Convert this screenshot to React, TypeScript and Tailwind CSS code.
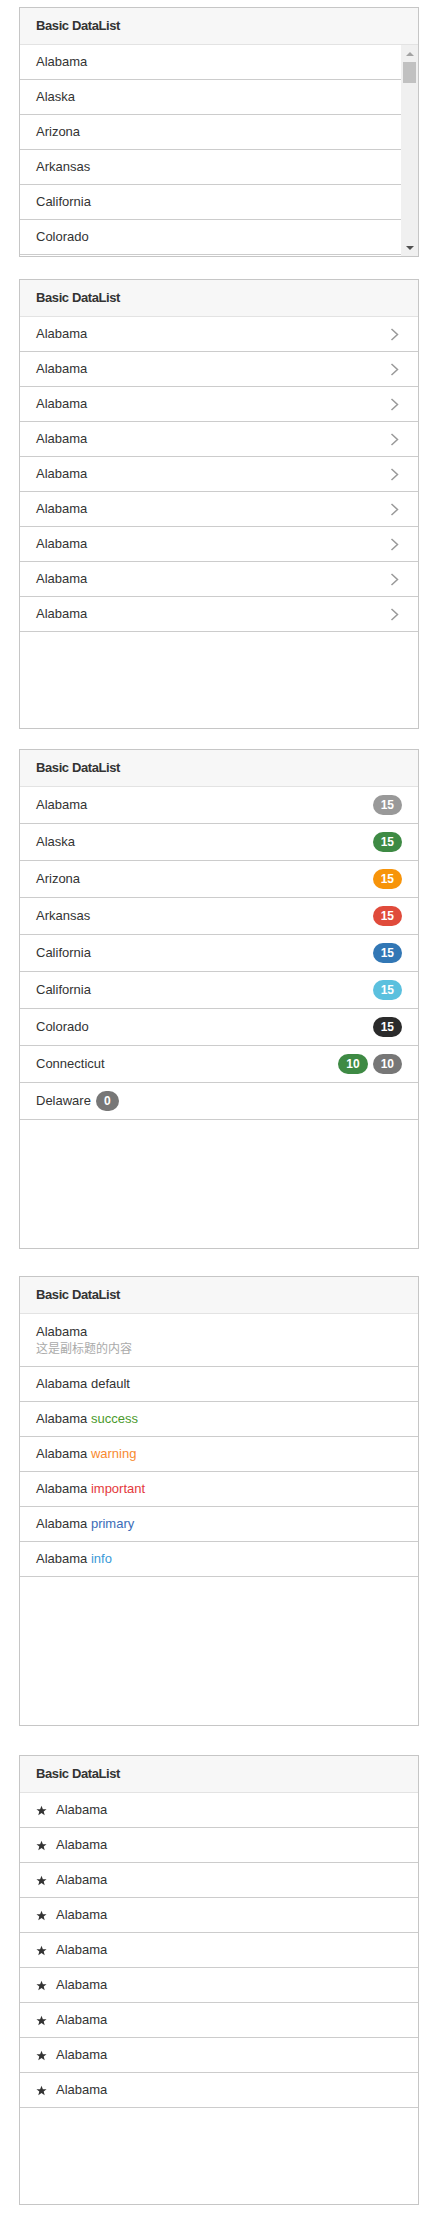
import React from "react";

const FONT = "font-['Liberation_Sans','Noto_Sans_CJK_SC',sans-serif]";

const STATES = ["Alabama", "Alaska", "Arizona", "Arkansas", "California", "Colorado"];

type Badge = { text: string; color: string };

const BADGE_ROWS: { name: string; badges: Badge[]; inline?: boolean }[] = [
  { name: "Alabama", badges: [{ text: "15", color: "bg-[#999999]" }] },
  { name: "Alaska", badges: [{ text: "15", color: "bg-[#3e8a44]" }] },
  { name: "Arizona", badges: [{ text: "15", color: "bg-[#f7940a]" }] },
  { name: "Arkansas", badges: [{ text: "15", color: "bg-[#e04b3b]" }] },
  { name: "California", badges: [{ text: "15", color: "bg-[#3277b5]" }] },
  { name: "California", badges: [{ text: "15", color: "bg-[#5bc0de]" }] },
  { name: "Colorado", badges: [{ text: "15", color: "bg-[#2b2b2b]" }] },
  {
    name: "Connecticut",
    badges: [
      { text: "10", color: "bg-[#3e8a44]" },
      { text: "10", color: "bg-[#777777]" },
    ],
  },
  { name: "Delaware", badges: [{ text: "0", color: "bg-[#777777]" }], inline: true },
];

const COLOR_ROWS = [
  { word: "default", color: "text-[#333333]" },
  { word: "success", color: "text-[#4a9a2c]" },
  { word: "warning", color: "text-[#f88a30]" },
  { word: "important", color: "text-[#e4393c]" },
  { word: "primary", color: "text-[#3b6cb7]" },
  { word: "info", color: "text-[#3a99d8]" },
];

export default function App() {
  const nine = Array.from({ length: 9 });

  return (
    <div className={`min-h-screen bg-white pl-[19px] pt-[7px] pb-[32px] text-[13px] text-[#333] ${FONT}`}>
      {/* ── 1. scrolling list ───────────────────────── */}
      <Card className="h-[250px]">
        <div className="flex h-[211px]">
          <div className="flex-1">
            {STATES.map((s, i) => (
              <Row key={i}>{s}</Row>
            ))}
          </div>
          <FakeScrollbar />
        </div>
      </Card>

      {/* ── 2. chevrons ─────────────────────────────── */}
      <Card className="mt-[22px] h-[450px]">
        {nine.map((_, i) => (
          <Row key={i}>
            <span className="flex-1">Alabama</span>
            <svg width="9" height="13" viewBox="0 0 9 13" className="mr-[3px]">
              <polyline points="1.5,1 7.5,6.5 1.5,12" fill="none" stroke="#999" strokeWidth="1.5" />
            </svg>
          </Row>
        ))}
      </Card>

      {/* ── 3. badges ───────────────────────────────── */}
      <Card className="mt-[20px] h-[500px]">
        {BADGE_ROWS.map((r, i) => (
          <div key={i} className="flex h-[37px] items-center border-b border-[#cccccc] px-4">
            <span className={r.inline ? "mr-[5px]" : "flex-1"}>{r.name}</span>
            <div className="flex gap-[5px]">
              {r.badges.map((b, j) => (
                <span
                  key={j}
                  className={`flex h-[20px] items-center rounded-full px-2 text-[12px] font-bold text-white ${b.color}`}
                >
                  {b.text}
                </span>
              ))}
            </div>
          </div>
        ))}
      </Card>

      {/* ── 4. coloured words ───────────────────────── */}
      <Card className="mt-[27px] h-[450px]">
        <div className="flex h-[53px] flex-col justify-center border-b border-[#cccccc] px-4">
          <span className="leading-[18px]">Alabama</span>
          <span className="text-[12px] leading-[17px] text-[#aaaaaa]">这是副标题的内容</span>
        </div>
        {COLOR_ROWS.map((r) => (
          <Row key={r.word}>
            Alabama&nbsp;<span className={r.color}>{r.word}</span>
          </Row>
        ))}
      </Card>

      {/* ── 5. stars ────────────────────────────────── */}
      <Card className="mt-[29px] h-[450px]">
        {nine.map((_, i) => (
          <Row key={i}>
            <svg width="11" height="11" viewBox="0 0 24 24" className="mr-[9px] mt-[1px]">
              <polygon
                points="12,1.5 15,9 23,9.3 16.8,14.3 19,22.2 12,17.7 5,22.2 7.2,14.3 1,9.3 9,9"
                fill="#333"
              />
            </svg>
            Alabama
          </Row>
        ))}
      </Card>
    </div>
  );
}

// ── Sub-components ──────────────────────────────────────────────────

function Card({ className, children }: { className: string; children: React.ReactNode }) {
  return (
    <div className={`flex w-[400px] flex-col overflow-hidden border border-[#c6c6c6] bg-white ${className}`}>
      <div className="flex h-[37px] shrink-0 items-center border-b border-[#e3e3e3] bg-[#f7f7f7] px-4 text-[13px] font-bold tracking-[-0.4px] text-[#333]">
        Basic DataList
      </div>
      <div className="flex-1">{children}</div>
    </div>
  );
}

function Row({ children }: { children: React.ReactNode }) {
  return <div className="flex h-[35px] items-center border-b border-[#cccccc] px-4">{children}</div>;
}

function FakeScrollbar() {
  return (
    <div className="flex w-[17px] shrink-0 flex-col items-center bg-[#f0f0f0]">
      <div className="flex h-[17px] w-full items-center justify-center">
        <div className="h-0 w-0 border-x-[4px] border-b-[4px] border-x-transparent border-b-[#a3a3a3]" />
      </div>
      <div className="h-[21px] w-[13px] bg-[#c1c1c1]" />
      <div className="flex-1" />
      <div className="flex h-[17px] w-full items-center justify-center">
        <div className="h-0 w-0 border-x-[4px] border-t-[4px] border-x-transparent border-t-[#505050]" />
      </div>
    </div>
  );
}
